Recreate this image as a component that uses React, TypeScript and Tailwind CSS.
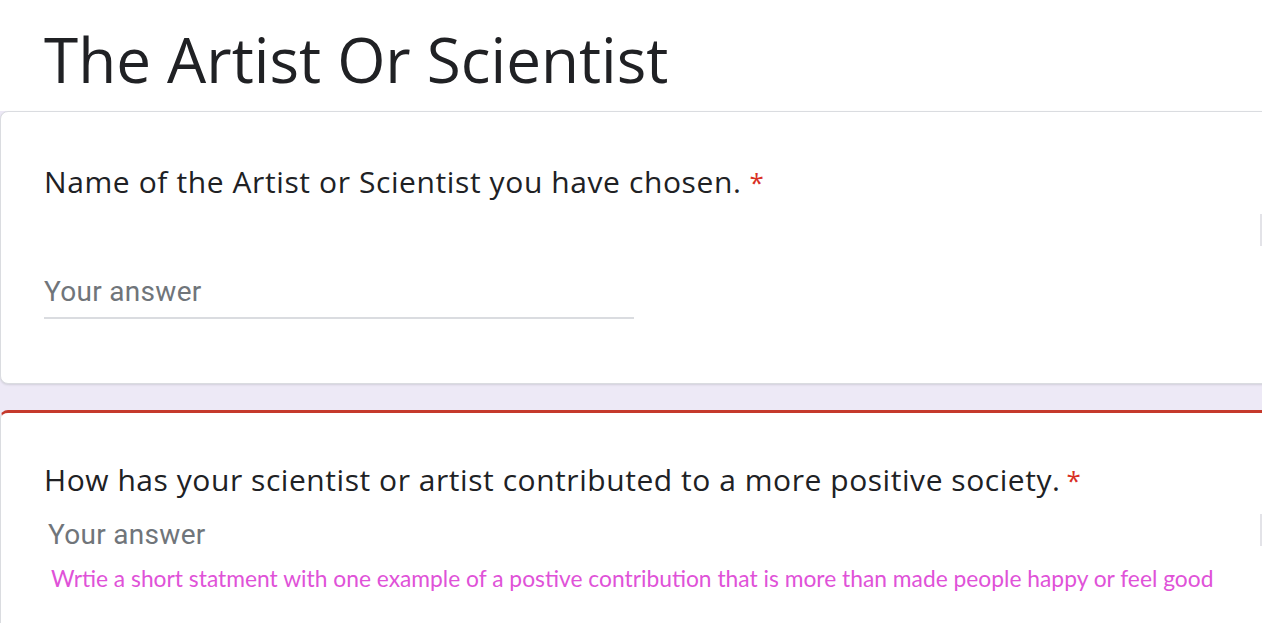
export default function App() {
  return (
    <div className="relative h-[623px] w-[1262px] overflow-hidden bg-[#ede9f6] font-['Open_Sans',sans-serif]">
      {/* Form title */}
      <div className="h-[111px] bg-white pl-[44px] pt-[19px]">
        <h1 className="text-[62px] leading-[80px] text-[#202124]">The Artist Or Scientist</h1>
      </div>

      {/* Question 1 */}
      <div className="-mr-4 h-[273px] rounded-l-lg border border-[#dadce0] bg-white pl-[43px] pt-[52px] shadow-[0_1px_2px_rgba(60,64,67,0.15)]">
        <div className="flex items-start text-[30px] leading-[36px] tracking-[0.6px] text-[#202124]">
          <span>Name of the Artist or Scientist you have chosen.</span>
          <span className="ml-[8px] text-[26px] text-[#d93025]">*</span>
        </div>
        <div className="mt-[75px] w-[590px] border-b-2 border-[#dadce0] pb-[8px] font-['Roboto',sans-serif] text-[28px] leading-[34px] tracking-[0.3px] text-[#70757a]">
          Your answer
        </div>
      </div>

      {/* Question 2 */}
      <div className="-mr-4 mt-[26px] h-[300px] rounded-l-lg border-t-[3px] border-l border-[#c5392c] border-l-[#dadce0] bg-white pl-[43px] pt-[49px]">
        <div className="flex items-start text-[30px] leading-[36px] tracking-[0.55px] text-[#202124]">
          <span>How has your scientist or artist contributed to a more positive society.</span>
          <span className="ml-[6px] text-[26px] text-[#d93025]">*</span>
        </div>
        <div className="mt-[20px] pl-[4px] font-['Roboto',sans-serif] text-[28px] leading-[34px] tracking-[0.3px] text-[#70757a]">
          Your answer
        </div>
        <div className="mt-[12px] pl-[7px] font-['Lato',sans-serif] text-[22.8px] leading-[28px] text-[#e052d8]">
          Wrtie a short statment with one example of a postive contribution that is more than made people happy or feel good
        </div>
      </div>

      {/* Side rail edges */}
      <div className="absolute right-0 top-[214px] h-[32px] w-[2px] bg-[#e3e3e8]" />
      <div className="absolute right-0 top-[514px] h-[32px] w-[2px] bg-[#e3e3e8]" />
    </div>
  );
}
